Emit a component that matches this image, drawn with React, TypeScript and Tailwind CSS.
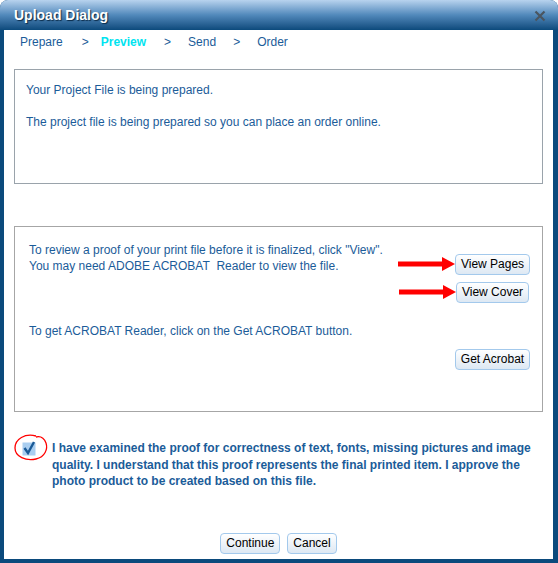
import React from "react";

function Btn({ label, className = "" }: { label: string; className?: string }) {
  return (
    <button
      className={`h-[21px] px-[5px] whitespace-nowrap rounded-[4px] border border-[#a3c9ec] bg-gradient-to-b from-white to-[#dde8f3] text-[12px] leading-[19px] text-black ${className}`}
    >
      {label}
    </button>
  );
}

function Arrow() {
  return (
    <svg width="57" height="14" viewBox="0 0 57 14" className="shrink-0">
      <rect x="0" y="4.5" width="46" height="5" fill="#ff0000" />
      <polygon points="44,0 57,7 44,14" fill="#ff0000" />
    </svg>
  );
}

export default function App() {
  const steps = [
    { label: "Prepare", cls: "text-[#1b5c99] mr-[19px]" },
    { label: ">", cls: "text-[#1b5c99] mr-[12px]" },
    { label: "Preview", cls: "text-[#00e4f0] font-bold mr-[18px]" },
    { label: ">", cls: "text-[#1b5c99] mr-[17px]" },
    { label: "Send", cls: "text-[#1b5c99] mr-[17px]" },
    { label: ">", cls: "text-[#1b5c99] mr-[17px]" },
    { label: "Order", cls: "text-[#1b5c99]" },
  ];

  return (
    <div className="w-[558px] h-[563px] bg-white font-['Liberation_Sans',Arial,sans-serif]">
      <div className="w-full h-full flex flex-col bg-[#0b4a7c] rounded-t-[8px] overflow-hidden">
        {/* Title bar */}
        <div className="h-[30px] shrink-0 flex items-center justify-between pl-[14px] pr-[12px] bg-gradient-to-b from-[#b8d3ee] via-[#5189bb] to-[#0b4a7c]">
          <span className="text-white font-bold text-[14px] [text-shadow:1px_1px_1px_#0a2a48]">
            Upload Dialog
          </span>
          <svg width="12" height="12" viewBox="0 0 12 12" className="mt-[2px]">
            <path d="M1.5 1.5 L10.5 10.5 M10.5 1.5 L1.5 10.5" stroke="#4a5560" strokeWidth="2.2" />
          </svg>
        </div>

        {/* Body */}
        <div className="flex-1 ml-[4px] mr-[5px] mb-[4px] bg-white flex flex-col px-[10px]">
          <nav className="h-[39px] shrink-0 flex pt-[5px] pl-[6px] text-[12px] leading-[15px]">
            {steps.map((s, i) => (
              <span key={i} className={s.cls}>
                {s.label}
              </span>
            ))}
          </nav>

          {/* Status box */}
          <div className="h-[115px] shrink-0 border border-[#9aa3ab] px-[11px] pt-[13px] text-[12px] leading-[15px] text-[#1b5c99]">
            <p>Your Project File is being prepared.</p>
            <p className="mt-[17px]">
              The project file is being prepared so you can place an order online.
            </p>
          </div>

          {/* Proof box */}
          <div className="h-[186px] shrink-0 mt-[42px] border border-[#a6a6a6] flex justify-between pl-[14px] pr-[12px] pt-[15px] text-[12px] text-[#1b5c99]">
            <div className="leading-[16px]">
              <p>To review a proof of your print file before it is finalized, click "View".</p>
              <p>You may need ADOBE ACROBAT&nbsp; Reader to view the file.</p>
              <p className="mt-[49px]">To get ACROBAT Reader, click on the Get ACROBAT button.</p>
            </div>
            <div className="flex flex-col items-center w-[75px] shrink-0 pt-[12px]">
              <div className="relative">
                <div className="absolute right-full top-[3px]">
                  <Arrow />
                </div>
                <Btn label="View Pages" />
              </div>
              <div className="relative mt-[7px]">
                <div className="absolute right-full top-[3px]">
                  <Arrow />
                </div>
                <Btn label="View Cover" />
              </div>
              <Btn label="Get Acrobat" className="mt-[46px]" />
            </div>
          </div>

          {/* Approval */}
          <div className="mt-[25px] flex items-start">
            <div className="relative w-[38px] shrink-0 h-[20px]">
              <svg width="36" height="30" viewBox="0 0 36 30" className="absolute left-[-1px] top-[-4px]">
                <path
                  d="M23 3 C12 0 2 6 2 15 C2 24 13 28 23 26 C32 24 35 16 33 10 C31 5 27 3 23 4"
                  fill="none"
                  stroke="#ff0000"
                  strokeWidth="1.3"
                />
                <rect x="9.5" y="9.5" width="13" height="13" fill="#a9cef0" />
                <path d="M11.5 15 L15 20 L21 9" fill="none" stroke="#1a5a97" strokeWidth="2.4" />
              </svg>
            </div>
            <p className="text-[12px] leading-[16.5px] font-bold text-[#1b5c99] mt-[3px]">
              I have examined the proof for correctness of text, fonts, missing pictures and image
              <br />
              quality. I understand that this proof represents the final printed item. I approve the
              <br />
              photo product to be created based on this file.
            </p>
          </div>

          <div className="mt-auto mb-[5px] flex justify-center gap-[7px]">
            <Btn label="Continue" />
            <Btn label="Cancel" />
          </div>
        </div>
      </div>
    </div>
  );
}
